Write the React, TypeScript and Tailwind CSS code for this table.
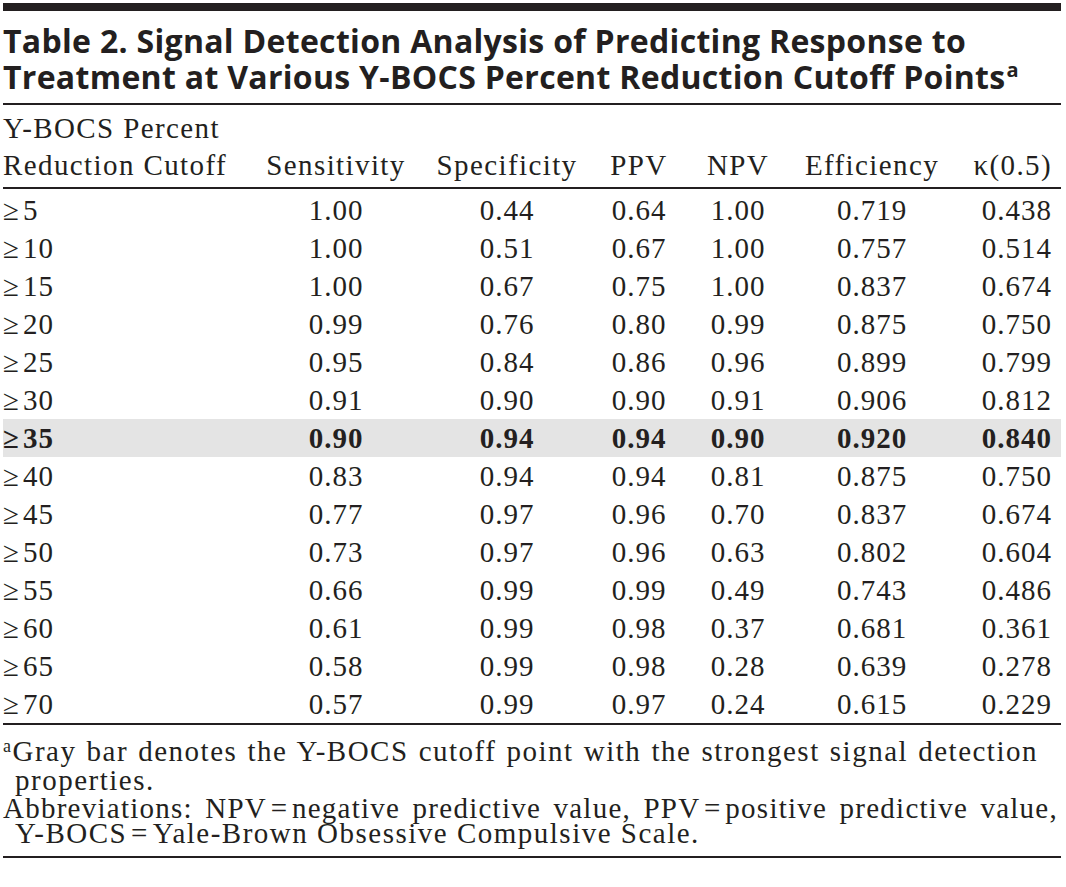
import React from "react";

const rows: [string, string, string, string, string, string, string][] = [
  ["5", "1.00", "0.44", "0.64", "1.00", "0.719", "0.438"],
  ["10", "1.00", "0.51", "0.67", "1.00", "0.757", "0.514"],
  ["15", "1.00", "0.67", "0.75", "1.00", "0.837", "0.674"],
  ["20", "0.99", "0.76", "0.80", "0.99", "0.875", "0.750"],
  ["25", "0.95", "0.84", "0.86", "0.96", "0.899", "0.799"],
  ["30", "0.91", "0.90", "0.90", "0.91", "0.906", "0.812"],
  ["35", "0.90", "0.94", "0.94", "0.90", "0.920", "0.840"],
  ["40", "0.83", "0.94", "0.94", "0.81", "0.875", "0.750"],
  ["45", "0.77", "0.97", "0.96", "0.70", "0.837", "0.674"],
  ["50", "0.73", "0.97", "0.96", "0.63", "0.802", "0.604"],
  ["55", "0.66", "0.99", "0.99", "0.49", "0.743", "0.486"],
  ["60", "0.61", "0.99", "0.98", "0.37", "0.681", "0.361"],
  ["65", "0.58", "0.99", "0.98", "0.28", "0.639", "0.278"],
  ["70", "0.57", "0.99", "0.97", "0.24", "0.615", "0.229"],
];

const grid =
  "grid grid-cols-[247px_172px_170px_94px_104px_164px_1fr] items-center";

const eq = "\u200A=\u200A";

export default function App() {
  return (
    <div className="w-[1066px] h-[887px] bg-white text-[#231f20] pl-[3px] pr-[5px] pt-[3px]">
      <div className="h-[8px] bg-[#231f20]" />
      <div
        className="mt-[12px] text-[32px] leading-[36px] font-bold whitespace-nowrap tracking-[0.3px]"
        style={{ fontFamily: '"Open Sans", "Noto Sans", sans-serif' }}
      >
        <div>Table 2. Signal Detection Analysis of Predicting Response to</div>
        <div>
          Treatment at Various Y-BOCS Percent Reduction Cutoff Points
          <span className="text-[20px] relative top-[-12px] ml-[1px]">a</span>
        </div>
      </div>
      <div className="mt-[3px] h-[2px] bg-[#231f20]" />

      <div
        className="text-[29px] tracking-[1.4px]"
        style={{ fontFamily: '"Liberation Serif", "Times New Roman", serif' }}
      >
        <div className={`${grid} mt-[5px] leading-[37px]`}>
          <div className="whitespace-nowrap">
            Y-BOCS Percent
            <br />
            Reduction Cutoff
          </div>
          <div className="self-end text-center">Sensitivity</div>
          <div className="self-end text-center">Specificity</div>
          <div className="self-end text-center">PPV</div>
          <div className="self-end text-center">NPV</div>
          <div className="self-end text-center">Efficiency</div>
          <div className="self-end text-right pr-[9px]">κ(0.5)</div>
        </div>
        <div className="mt-[3px] h-[2px] bg-[#231f20]" />

        <div className="mt-[2px] tracking-[1px]">
          {rows.map((r) => {
            const hl = r[0] === "35";
            return (
              <div
                key={r[0]}
                className={`${grid} h-[38px] leading-[38px] ${
                  hl ? "bg-[#e4e4e4] font-bold" : ""
                }`}
              >
                <div>
                  ≥<span className="ml-[3px]">{r[0]}</span>
                </div>
                <div className="text-center">{r[1]}</div>
                <div className="text-center">{r[2]}</div>
                <div className="text-center">{r[3]}</div>
                <div className="text-center">{r[4]}</div>
                <div className="text-center">{r[5]}</div>
                <div className="text-right pr-[9px]">{r[6]}</div>
              </div>
            );
          })}
        </div>
        <div className="h-[2px] bg-[#231f20]" />

        <div className="mt-[14px] leading-[25px] whitespace-nowrap tracking-[1.5px]">
          <div className="w-[1035px] text-justify [text-align-last:justify]">
            <span className="text-[18px] relative top-[-9px]">a</span>Gray bar
            denotes the Y-BOCS cutoff point with the strongest signal detection
          </div>
          <div className="pl-[12px]">properties.</div>
          <div className="mt-[3px] w-[1055px] text-justify [text-align-last:justify] tracking-[1.25px]">
            Abbreviations: NPV{eq}negative predictive value, PPV{eq}positive
            predictive value,
          </div>
          <div className="pl-[12px]">
            Y-BOCS{eq}Yale-Brown Obsessive Compulsive Scale.
          </div>
        </div>
        <div className="mt-[10px] h-[2px] bg-[#231f20]" />
      </div>
    </div>
  );
}
